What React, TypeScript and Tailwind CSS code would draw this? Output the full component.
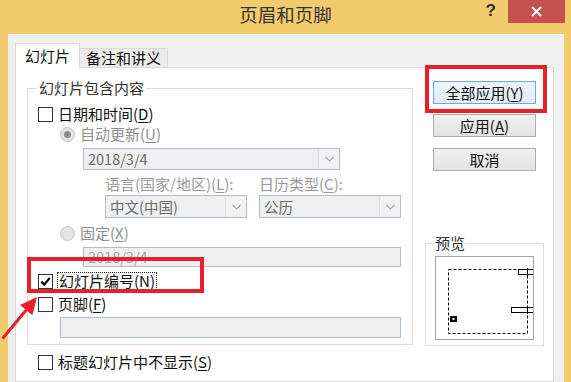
import type { ReactNode } from "react";

// accelerator key, underlined like the win32 dialog
function Acc({ k }: { k: string }) {
  return <span className="underline underline-offset-[2px]">{k}</span>;
}

function CheckBox({ checked }: { checked?: boolean }) {
  return (
    <span className="w-[15px] h-[15px] shrink-0 border border-[#333] bg-white flex items-center justify-center">
      {checked && (
        <svg width="11" height="11" viewBox="0 0 11 11">
          <path d="M1.3 5.6 L4.3 8.6 L9.8 1.9" stroke="#000" strokeWidth="2.2" fill="none" />
        </svg>
      )}
    </span>
  );
}

function Radio({ on }: { on?: boolean }) {
  return (
    <span className="w-[15px] h-[15px] shrink-0 rounded-full border border-[#c8c8c8] bg-[#e4e4e4] flex items-center justify-center">
      {on && <span className="w-[7px] h-[7px] rounded-full bg-[#8c8c8c]" />}
    </span>
  );
}

function Combo({ text, className }: { text: string; className: string }) {
  return (
    <div className={`flex border border-[#abbfda] bg-[#efefef] ${className}`}>
      <span className="flex-1 pl-[4px] flex items-center text-[#6b6b6b] text-[14.5px]">{text}</span>
      <span className="w-[21px] border-l border-[#dedede] bg-[#f2f2f2] flex items-center justify-center">
        <svg width="9" height="6" viewBox="0 0 9 6">
          <path d="M0.5 0.8 L4.5 4.8 L8.5 0.8" stroke="#a6a6a6" strokeWidth="1.2" fill="none" />
        </svg>
      </span>
    </div>
  );
}

function Row({ className, children }: { className: string; children: ReactNode }) {
  return <div className={`flex items-center gap-[5px] h-[20px] leading-[20px] ${className}`}>{children}</div>;
}

function Button({ label, primary }: { label: ReactNode; primary?: boolean }) {
  return (
    <button
      className={`ml-[8px] w-[103px] h-[23px] border flex items-center justify-center text-[15px] leading-[20px] text-[#111] ${
        primary
          ? "border-[#6ea8de] bg-gradient-to-b from-[#eef4fa] to-[#e2ebf4]"
          : "border-[#adadad] bg-gradient-to-b from-[#f0f0f0] to-[#e3e3e3]"
      }`}
    >
      {label}
    </button>
  );
}

export default function App() {
  return (
    <div className="relative w-[571px] h-[382px] overflow-hidden bg-[#f2cc6c] flex flex-col font-['Noto_Sans_CJK_SC',sans-serif] text-[15px] text-[#111]">
      {/* Title bar */}
      <div className="h-[34px] shrink-0 grid grid-cols-3">
        <div />
        <div className="h-[30px] flex items-center justify-center text-[18.5px] text-[#333]">页眉和页脚</div>
        <div className="flex justify-end items-start pr-[6px]">
          <span className="mt-[1px] mr-[12px] font-bold text-[17px] leading-[20px] text-[#333] font-['Liberation_Sans',sans-serif]">?</span>
          <span className="w-[57px] h-[23px] bg-[#c75050] flex items-center justify-center">
            <svg width="11" height="11" viewBox="0 0 11 11">
              <path d="M1 1 L10 10 M10 1 L1 10" stroke="#fff" strokeWidth="2" />
            </svg>
          </span>
        </div>
      </div>

      {/* Client area */}
      <div className="ml-[8px] w-[556px] flex-1 bg-[#f0f0f0] flex flex-col">
        {/* Tabs */}
        <div className="mt-[9px] ml-[7px] h-[24px] flex items-end">
          <div className="relative z-10 -mb-px w-[65px] h-[25px] bg-white border border-b-0 border-[#d9d9d9] flex items-center justify-center pb-[1px] leading-[20px]">
            幻灯片
          </div>
          <div className="w-[88px] h-[19px] bg-[#ececec] border border-l-0 border-b-0 border-[#d9d9d9] flex items-center justify-center leading-[18px]">
            备注和讲义
          </div>
        </div>

        {/* Tab page */}
        <div className="ml-[7px] w-[539px] flex-1 bg-white border border-[#d9d9d9] flex">
          {/* Left column */}
          <div className="ml-[11px] w-[386px] flex flex-col">
            <div className="mt-[20px] border border-[#dcdcdc] flex flex-col pb-[6px]">
              <span className="-mt-[11px] ml-[9px] px-[2px] w-fit bg-white h-[20px] leading-[20px] text-[#333]">幻灯片包含内容</span>

              <Row className="mt-[6px] pl-[10px]">
                <CheckBox />
                <span>日期和时间(<Acc k="D" />)</span>
              </Row>
              <Row className="pl-[32px] text-[#8f8f8f]">
                <Radio on />
                <span>自动更新(<Acc k="U" />)</span>
              </Row>
              <Combo text="2018/3/4" className="mt-[4px] ml-[55px] w-[257px] h-[22px]" />

              <div className="mt-[4px] ml-[77px] h-[20px] leading-[20px] flex gap-[12px] text-[#9a9a9a]">
                <span className="w-[142px]">语言(国家/地区)(<Acc k="L" />):</span>
                <span>日历类型(<Acc k="C" />):</span>
              </div>
              <div className="mt-[1px] ml-[77px] flex gap-[12px]">
                <Combo text="中文(中国)" className="w-[142px] h-[23px]" />
                <Combo text="公历" className="w-[142px] h-[23px]" />
              </div>

              <Row className="mt-[5px] pl-[32px] text-[#8f8f8f]">
                <Radio />
                <span>固定(<Acc k="X" />)</span>
              </Row>
              <div className="mt-[4px] ml-[55px] w-[318px] h-[20px] border border-[#abbfda] bg-[#efefef] pl-[4px] flex items-center text-[14.5px] text-[#a3a3a3]">
                2018/3/4
              </div>

              <Row className="mt-[4px] pl-[10px]">
                <CheckBox checked />
                <span className="-ml-[1px] px-[1px] border border-dotted border-[#222] leading-[16px]">
                  幻灯片编号(<Acc k="N" />)
                </span>
              </Row>
              <Row className="mt-[3px] pl-[10px]">
                <CheckBox />
                <span>页脚(<Acc k="F" />)</span>
              </Row>
              <div className="mt-[3px] ml-[32px] w-[341px] h-[21px] border border-[#abbfda] bg-[#efefef]" />
            </div>

            <Row className="mt-[7px] pl-[11px]">
              <CheckBox />
              <span>标题幻灯片中不显示(<Acc k="S" />)</span>
            </Row>
          </div>

          {/* Right column */}
          <div className="ml-[12px] w-[119px] flex flex-col">
            <div className="mt-[13px]">
              <Button primary label={<>全部应用(<Acc k="Y" />)</>} />
            </div>
            <div className="mt-[10px]">
              <Button label={<>应用(<Acc k="A" />)</>} />
            </div>
            <div className="mt-[11px]">
              <Button label="取消" />
            </div>

            <div className="mt-[72px] border border-[#dcdcdc] pb-[5px] flex flex-col">
              <span className="-mt-[11px] ml-[8px] px-[1px] w-fit bg-white h-[20px] leading-[20px] text-[#333]">预览</span>
              <div className="mt-[3px] ml-[9px] w-[99px] h-[84px] border border-[#a3a3a3] bg-white">
                <svg width="97" height="82" viewBox="0 0 97 82">
                  <rect x="12.5" y="12.5" width="79" height="64" fill="none" stroke="#000" strokeDasharray="3 2" />
                  <rect x="82.5" y="12.5" width="16" height="5" fill="#fff" stroke="#000" />
                  <line x1="91.5" y1="11" x2="91.5" y2="19" stroke="#000" />
                  <rect x="75.5" y="50.5" width="23" height="5" fill="#fff" stroke="#000" />
                  <line x1="91.5" y1="49" x2="91.5" y2="57" stroke="#000" />
                  <rect x="14" y="59" width="7" height="6" fill="#000" />
                  <rect x="16.5" y="61" width="2" height="2" fill="#fff" />
                </svg>
              </div>
            </div>
          </div>
        </div>
      </div>

      {/* Annotations drawn over the dialog */}
      <div className="absolute left-[27px] top-[257px] w-[177px] h-[36px] border-4 border-[#e8202a]" />
      <div className="absolute left-[425px] top-[65px] w-[122px] h-[48px] border-4 border-[#e8202a]" />
      <svg className="absolute left-0 top-[290px]" width="45" height="55" viewBox="0 0 45 55">
        <polygon points="1.5,47.6 3.7,49.4 27.4,21.1 25.0,19.1" fill="#e8202a" />
        <polygon points="37,7 32.4,25.2 20,15" fill="#e8202a" />
      </svg>
    </div>
  );
}
